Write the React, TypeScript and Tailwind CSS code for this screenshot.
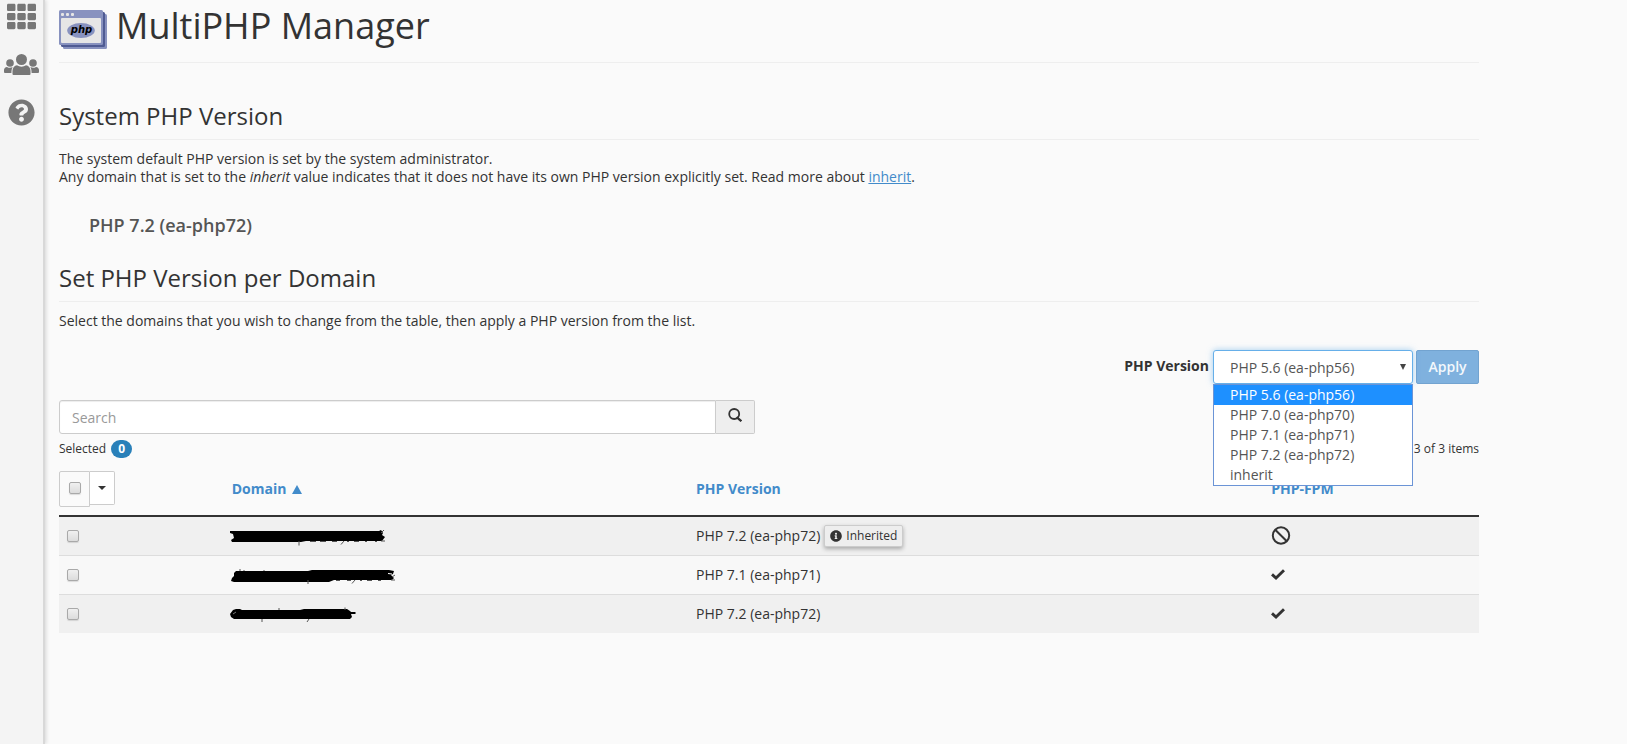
import { useState } from "react";
import { FaQuestionCircle, FaTh, FaInfoCircle } from "react-icons/fa";

const VERSIONS = [
  "PHP 5.6 (ea-php56)",
  "PHP 7.0 (ea-php70)",
  "PHP 7.1 (ea-php71)",
  "PHP 7.2 (ea-php72)",
  "inherit",
];

const CHECKBOX =
  "block size-3 appearance-none rounded-[2px] border border-[#a9a9a9] bg-linear-to-b from-[#f0f0f0] to-[#dcdcdc] shadow-[0_1px_1px_rgba(0,0,0,0.12)] checked:bg-[#428bca]";

function UsersIcon() {
  return (
    <svg viewBox="0 0 35 21" className="h-[21px] w-[35px]" fill="currentColor" aria-hidden="true">
      <circle cx="17.5" cy="5.5" r="5.5" />
      <circle cx="6" cy="9" r="3.8" />
      <circle cx="29" cy="9" r="3.8" />
      <path d="M8.5 20V17C8.5 13.5 10.5 11.6 13 11.3C15.5 13.2 19.5 13.2 22 11.3C24.5 11.6 26.5 13.5 26.5 17V20Q26.5 21 25.5 21H9.5Q8.5 21 8.5 20Z" />
      <path d="M0 18V16C0 14.3 1.2 13 3 12.9C4.8 14.1 7 14.1 8.6 13C7.8 14.4 7.4 16.4 7.4 19H1Q0 19 0 18Z" />
      <path d="M35 18V16C35 14.3 33.8 13 32 12.9C30.2 14.1 28 14.1 26.4 13C27.2 14.4 27.6 16.4 27.6 19H34Q35 19 35 18Z" />
    </svg>
  );
}

function PhpWindowIcon() {
  return (
    <svg viewBox="0 0 48 39" className="h-[39px] w-12 shrink-0" aria-hidden="true">
      <rect x="4" y="4" width="44" height="35" rx="1.5" fill="#8892bf" />
      <rect x="2" y="2" width="44" height="35" rx="1.5" fill="#4f5b93" />
      <rect x="0" y="0" width="44" height="35" rx="1.5" fill="#8892bf" />
      <rect x="2" y="8" width="40" height="25" rx="1" fill="#e6e6e6" />
      <rect x="2" y="3" width="3" height="3" rx="1" fill="#e6e6e6" />
      <rect x="7" y="3" width="3" height="3" rx="1" fill="#e6e6e6" />
      <rect x="12" y="3" width="3" height="3" rx="1" fill="#e6e6e6" />
      <ellipse cx="22" cy="20.5" rx="13.8" ry="7.4" fill="#8892bf" />
      <text
        x="22.5"
        y="23"
        textAnchor="middle"
        className="font-['DejaVu_Sans',sans-serif] text-[10px] font-bold italic"
        fill="#000"
      >
        php
      </text>
    </svg>
  );
}

function SearchIcon() {
  return (
    <svg viewBox="0 0 14 14" className="size-3.5" fill="none" stroke="#333" aria-hidden="true">
      <circle cx="6.2" cy="6" r="5" strokeWidth="1.8" />
      <path d="M8.6 9.2L13.3 13.2" strokeWidth="2.2" />
    </svg>
  );
}

function BanIcon() {
  return (
    <svg viewBox="0 0 20 20" className="size-5" fill="none" stroke="#333" strokeWidth="2" aria-label="Disabled">
      <circle cx="10" cy="9.500" r="8.2" />
      <path d="M4.2 3.7L15.8 15.3" />
    </svg>
  );
}

function CheckIcon() {
  return (
    <svg viewBox="0 0 14 11" className="h-[11px] w-3.5" fill="none" stroke="#333" strokeWidth="2.9" aria-label="Enabled">
      <path d="M1 5.4L5 9L13 1.2" />
    </svg>
  );
}

function Redaction({ kind }: { kind: number }) {
  return (
    <svg viewBox="0 -2 170 20" className="-ml-1 h-5 w-[170px]" aria-label="Hidden domain">
      {kind === 0 && (
        <>
          <path d="M2 3H151L153 2L155 5L154 7L157 9L154 13H78L73 14H4L3 12L6 10L5 6L2 5Z" />
          <path
            d="M71 13V17.500M82 13.500H88M92 13.500H98M104 13.500H109M113 16.500L116 13M119 13.500H121M126 13.500H131M137 13.500H139M147 13.500H149M153 13L157 13M153 5L156 2"
            fill="none"
            stroke="#555"
          />
        </>
      )}
      {kind === 1 && (
        <>
          <path d="M8 4H80L84 3H161L166 4L165 7L163 8L166 11L164 13H106L101 15H6L3 14L4 11L6 9V6Z" />
          <path d="M160 6.500L164 7" stroke="#fff" />
          <path
            d="M12 2V4M16 3V4M36 3V4M80 13V17M108 13.500H112M119 13.500H123M124 16.500L127 13M132 13.500H134M139 13.500H144M150 13.500H153M163 13L167 13M164 10L167 8"
            fill="none"
            stroke="#555"
          />
        </>
      )}
      {kind === 2 && (
        <>
          <path d="M5 4L8 3H12L14 4H72L76 3H119L122 5L123 6H127L128 7L127 8H123L124 11L122 13H6L3 11L2 8Z" />
          <path d="M5 8L8 6" stroke="#777" />
          <path d="M34 13V16M51 2V4M79 16L81 13M117 1.500V4" fill="none" stroke="#555" />
        </>
      )}
    </svg>
  );
}

const ROWS = [
  { version: "PHP 7.2 (ea-php72)", inherited: true, fpm: false },
  { version: "PHP 7.1 (ea-php71)", inherited: false, fpm: true },
  { version: "PHP 7.2 (ea-php72)", inherited: false, fpm: true },
];

export default function App() {
  const [version, setVersion] = useState(VERSIONS[0]);

  return (
    <div className="flex min-h-screen bg-[#fafafa] font-['Open_Sans',sans-serif] text-sm leading-[18px] text-[#333]">
      <nav className="flex w-[45px] shrink-0 flex-col items-center border-r-2 border-[#d8d8d8] bg-[#f4f4f4] pt-0.5 text-[#777] shadow-[1px_0_4px_rgba(0,0,0,0.15)]">
        <a href="#home" aria-label="Home">
          <FaTh className="size-[29px]" />
        </a>
        <a href="#users" aria-label="User Manager" className="mt-[23px]">
          <UsersIcon />
        </a>
        <a href="#help" aria-label="Help" className="mt-6">
          <FaQuestionCircle className="size-[27px]" />
        </a>
      </nav>

      <main className="mr-[148px] ml-3.5 min-w-0 flex-1">
        <header className="flex h-[63px] items-start gap-[9px] border-b border-[#eee] pt-1.5">
          <div className="pt-1">
            <PhpWindowIcon />
          </div>
          <h1 className="text-4xl leading-10">MultiPHP Manager</h1>
        </header>

        <section>
          <h2 className="mt-[38px] border-b border-[#eee] pb-2 text-2xl leading-[30px]">System PHP Version</h2>
          <p className="mt-2.5">
            The system default PHP version is set by the system administrator.
            <br />
            Any domain that is set to the <em>inherit</em> value indicates that it does not have its own PHP version
            explicitly set. Read more about{" "}
            <a href="#inherit" className="text-[#428bca] underline">
              inherit
            </a>
            .
          </p>
          <p className="mt-[27px] pl-[30px] text-lg leading-6 font-semibold text-[#555]">PHP 7.2 (ea-php72)</p>
        </section>

        <section>
          <h2 className="mt-[26px] border-b border-[#eee] pb-2 text-2xl leading-[30px]">Set PHP Version per Domain</h2>
          <p className="mt-2.5">
            Select the domains that you wish to change from the table, then apply a PHP version from the list.
          </p>

          <div className="mt-5 flex items-start justify-end gap-[3px]">
            <label htmlFor="php-version" className="pt-[7px] font-bold">
              PHP Version
            </label>
            <div className="relative ml-px w-[200px]">
              <select
                id="php-version"
                value={version}
                onChange={(e) => setVersion(e.target.value)}
                className="h-[34px] w-full appearance-none rounded-[3px] border border-[#66afe9] bg-white px-4 pt-0.5 text-[#555] shadow-[0_0_6px_rgba(102,175,233,0.6)] outline-none"
              >
                {VERSIONS.map((v) => (
                  <option key={v}>{v}</option>
                ))}
              </select>
              <svg
                viewBox="0 0 6 6"
                className="pointer-events-none absolute top-[14px] right-[7px] size-1.5"
                fill="#444"
                aria-hidden="true"
              >
                <path d="M0 0H6L3 6Z" />
              </svg>
              <ul
                role="listbox"
                aria-label="PHP Version"
                className="absolute inset-x-0 top-[34px] z-10 border border-[#6b94d6] bg-white text-[#555]"
              >
                {VERSIONS.map((v) => (
                  <li
                    key={v}
                    role="option"
                    aria-selected={v === version}
                    onClick={() => setVersion(v)}
                    className="h-5 px-4 leading-5 aria-selected:bg-[#1e90ff] aria-selected:text-white"
                  >
                    {v}
                  </li>
                ))}
              </ul>
            </div>
            <button
              type="button"
              className="h-[34px] w-[63px] rounded-[2px] border border-[#72a3d0] bg-[#7fb1de] font-semibold text-[#f3f8fc]"
            >
              Apply
            </button>
          </div>

          <div className="mt-4 flex w-[49%]">
            <input
              type="search"
              aria-label="Search"
              placeholder="Search"
              className="h-[34px] min-w-0 flex-1 rounded-l-[3px] border border-[#ccc] bg-white px-3 shadow-[inset_0_1px_1px_rgba(0,0,0,0.075)] outline-none placeholder:text-[#999]"
            />
            <button
              type="button"
              aria-label="Run search"
              className="flex h-[34px] w-[39px] items-center justify-center rounded-r-[2px] border border-l-0 border-[#ccc] bg-[#eee] pb-1"
            >
              <SearchIcon />
            </button>
          </div>

          <div className="mt-1.5 flex items-center justify-between text-xs leading-[18px]">
            <div className="flex items-center gap-[5px]">
              Selected
              <span className="rounded-full bg-[#2980b9] px-[7px] font-bold text-white">0</span>
            </div>
            <div>3 of 3 items</div>
          </div>

          <table className="mt-[5px] w-full table-fixed border-collapse text-left">
            <colgroup>
              <col className="w-[11.6%]" />
              <col className="w-[32.7%]" />
              <col className="w-[40.5%]" />
              <col />
            </colgroup>
            <thead>
              <tr className="border-b-2 border-[#333]">
                <th className="py-2">
                  <div className="flex items-start">
                    <div className="flex h-9 w-[31px] items-center justify-center rounded-l-[2px] border border-[#ccc] pb-0.5">
                      <input type="checkbox" aria-label="Select all" className={CHECKBOX} />
                    </div>
                    <button
                      type="button"
                      aria-label="Selection menu"
                      className="flex h-[34px] w-[25px] items-center justify-center rounded-r-[2px] border border-l-0 border-[#ccc] bg-white"
                    >
                      <svg viewBox="0 0 8 4" className="h-1 w-2" fill="#333" aria-hidden="true">
                        <path d="M0 0H8L4 4Z" />
                      </svg>
                    </button>
                  </div>
                </th>
                <th className="px-2 font-bold text-[#428bca]">
                  <a href="#domain" className="flex items-center gap-1.5">
                    Domain
                    <svg viewBox="0 0 10 9" className="h-[9px] w-2.5" fill="currentColor" aria-hidden="true">
                      <path d="M5 0L10 9H0Z" />
                    </svg>
                  </a>
                </th>
                <th className="px-2 font-bold text-[#428bca]">
                  <a href="#version">PHP Version</a>
                </th>
                <th className="px-2 font-bold text-[#428bca]">
                  <a href="#fpm">PHP-FPM</a>
                </th>
              </tr>
            </thead>
            <tbody>
              {ROWS.map((row, i) => (
                <tr key={i} className="h-[39px] border-t border-[#ddd] odd:bg-[#f0f0f0] even:bg-[#f8f8f8] first:border-t-0">
                  <td className="px-2">
                    <input type="checkbox" aria-label={`Select domain ${i + 1}`} className={CHECKBOX} />
                  </td>
                  <td className="px-2">
                    <Redaction kind={i} />
                  </td>
                  <td className="px-2">
                    <div className="flex items-center gap-1">
                      {row.version}
                      {row.inherited && (
                        <span className="flex h-[22px] items-center gap-1 rounded-[2px] border border-[#ccc] bg-[#eee] px-[5px] text-xs shadow-[0_2px_4px_rgba(0,0,0,0.3)]">
                          <FaInfoCircle className="size-3" />
                          Inherited
                        </span>
                      )}
                    </div>
                  </td>
                  <td className="px-2">{row.fpm ? <CheckIcon /> : <BanIcon />}</td>
                </tr>
              ))}
            </tbody>
          </table>
        </section>
      </main>
    </div>
  );
}
